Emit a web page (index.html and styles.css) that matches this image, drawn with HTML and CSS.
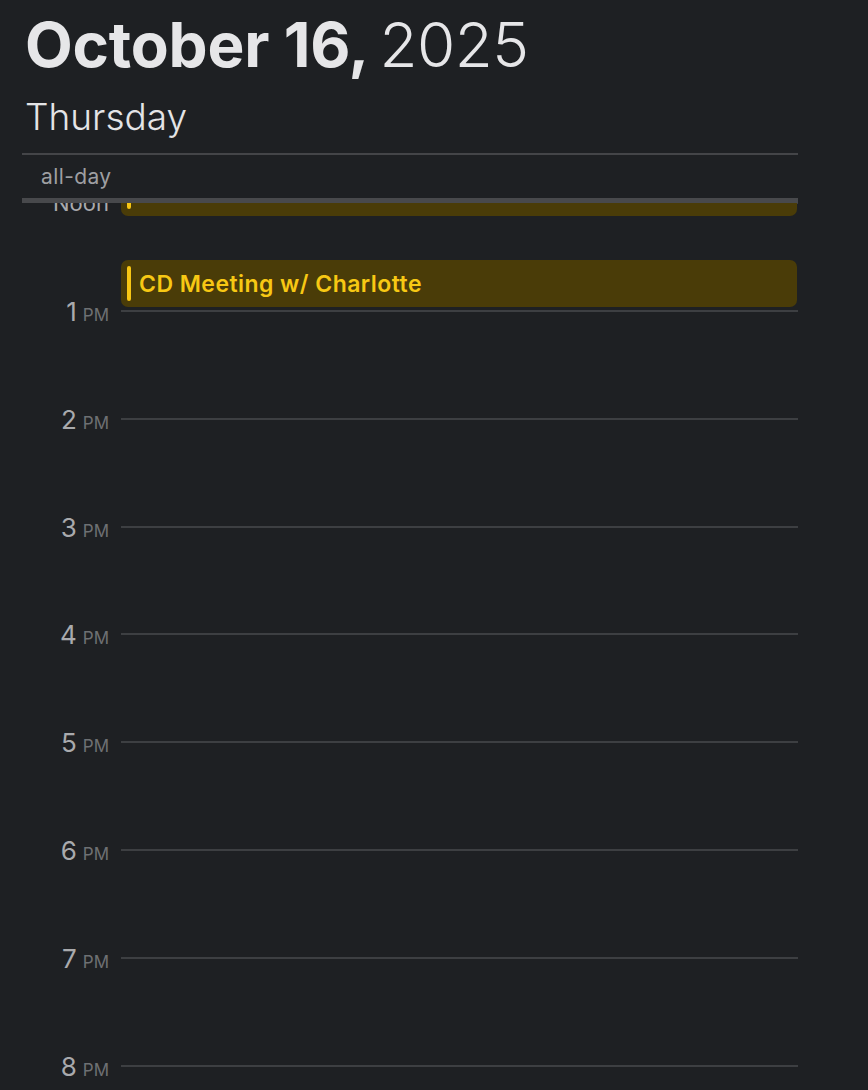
FILE: index.html
```html
<!DOCTYPE html>
<html lang="en">
<head>
<meta charset="utf-8">
<title>October 16, 2025</title>
<link rel="stylesheet" href="styles.css">
</head>
<body>
<div class="page">
  <header class="day-header">
    <h1 class="date"><span class="date-strong">October 16,</span> <span class="date-year">2025</span></h1>
    <div class="weekday">Thursday</div>
  </header>
  <div class="allday-row">
    <span class="allday-label">all-day</span>
  </div>
  <div class="timeline">
    <div class="timeline-content">
      <div class="hour"><div class="hour-label"><span class="hour-noon">Noon</span></div><div class="hour-line"></div></div>
      <div class="hour"><div class="hour-label"><span class="hour-num">1</span><span class="hour-ampm">PM</span></div><div class="hour-line"></div></div>
      <div class="hour"><div class="hour-label"><span class="hour-num">2</span><span class="hour-ampm">PM</span></div><div class="hour-line"></div></div>
      <div class="hour"><div class="hour-label"><span class="hour-num">3</span><span class="hour-ampm">PM</span></div><div class="hour-line"></div></div>
      <div class="hour"><div class="hour-label"><span class="hour-num">4</span><span class="hour-ampm">PM</span></div><div class="hour-line"></div></div>
      <div class="hour"><div class="hour-label"><span class="hour-num">5</span><span class="hour-ampm">PM</span></div><div class="hour-line"></div></div>
      <div class="hour"><div class="hour-label"><span class="hour-num">6</span><span class="hour-ampm">PM</span></div><div class="hour-line"></div></div>
      <div class="hour"><div class="hour-label"><span class="hour-num">7</span><span class="hour-ampm">PM</span></div><div class="hour-line"></div></div>
      <div class="hour"><div class="hour-label"><span class="hour-num">8</span><span class="hour-ampm">PM</span></div><div class="hour-line"></div></div>

      <div class="event event-earlier"><span class="event-bar"></span></div>
      <div class="event event-cd"><span class="event-bar"></span><span class="event-title">CD Meeting w/ Charlotte</span></div>
    </div>
  </div>
</div>
</body>
</html>
```

FILE: styles.css
```css
* { box-sizing: border-box; }

html, body {
  margin: 0;
  padding: 0;
  background: #1e2023;
  height: 100%;
  overflow: hidden;
}

body {
  font-family: Inter, "Noto Sans", "Liberation Sans", sans-serif;
  color: #e4e4e6;
}

.page {
  display: flex;
  flex-direction: column;
  height: 1090px;
}

.day-header {
  padding: 14px 0 0 25px;
}

.date {
  margin: 0;
  font-size: 62px;
  line-height: 62px;
  font-weight: 400;
  color: #e6e6e8;
  white-space: nowrap;
}

.date-strong { font-weight: 700; letter-spacing: -0.2px; }
.date-year { font-weight: 300; letter-spacing: -0.5px; margin-left: -7px; }

.weekday {
  margin-top: 22px;
  font-size: 37px;
  line-height: 37px;
  font-weight: 300;
  color: #e4e4e6;
}

.allday-row {
  margin: 18px 0 0 22px;
  width: 776px;
  height: 50px;
  border-top: 2px solid #444548;
  border-bottom: 5px solid #48494c;
  display: flex;
  align-items: center;
  padding-left: 19px;
}

.allday-label {
  font-size: 21px;
  color: #9e9fa2;
  letter-spacing: 0.4px;
}

.timeline {
  flex: 1;
  overflow: hidden;
  position: relative;
}

.timeline-content {
  position: relative;
  width: 798px;
  margin-top: -15px;
  display: flex;
  flex-direction: column;
  gap: 77.86px;
}

.hour {
  display: grid;
  grid-template-columns: 109px 1fr;
  column-gap: 12px;
  align-items: center;
  height: 30px;
}

.hour-label {
  display: flex;
  justify-content: flex-end;
  align-items: baseline;
  gap: 6px;
  transform: translateY(1px);
}

.hour-num {
  font-size: 26px;
  line-height: 30px;
  color: #a9aaad;
}

.hour-noon {
  font-size: 22px;
  line-height: 30px;
  color: #a9aaad;
  transform: translateY(-1px);
}

.hour-ampm {
  font-size: 17px;
  color: #6e7073;
}

.hour-line {
  height: 2px;
  background: #3d3f42;
}

.event {
  position: absolute;
  left: 121px;
  width: 676px;
  background: #4a3c08;
  border-radius: 7px;
  display: flex;
  align-items: center;
  padding: 6px 6px;
  z-index: 1;
}

.event-bar {
  align-self: stretch;
  width: 4px;
  border-radius: 2px;
  background: #f7c614;
  flex: none;
}

.event-title {
  margin-left: 8px;
  font-size: 23px;
  font-weight: 600;
  letter-spacing: 0.45px;
  color: #f7c814;
  white-space: nowrap;
}

.event-earlier {
  top: -40px;
  height: 68px;
  padding-bottom: 7px;
}

.event-cd {
  top: 72px;
  height: 47px;
}
```
